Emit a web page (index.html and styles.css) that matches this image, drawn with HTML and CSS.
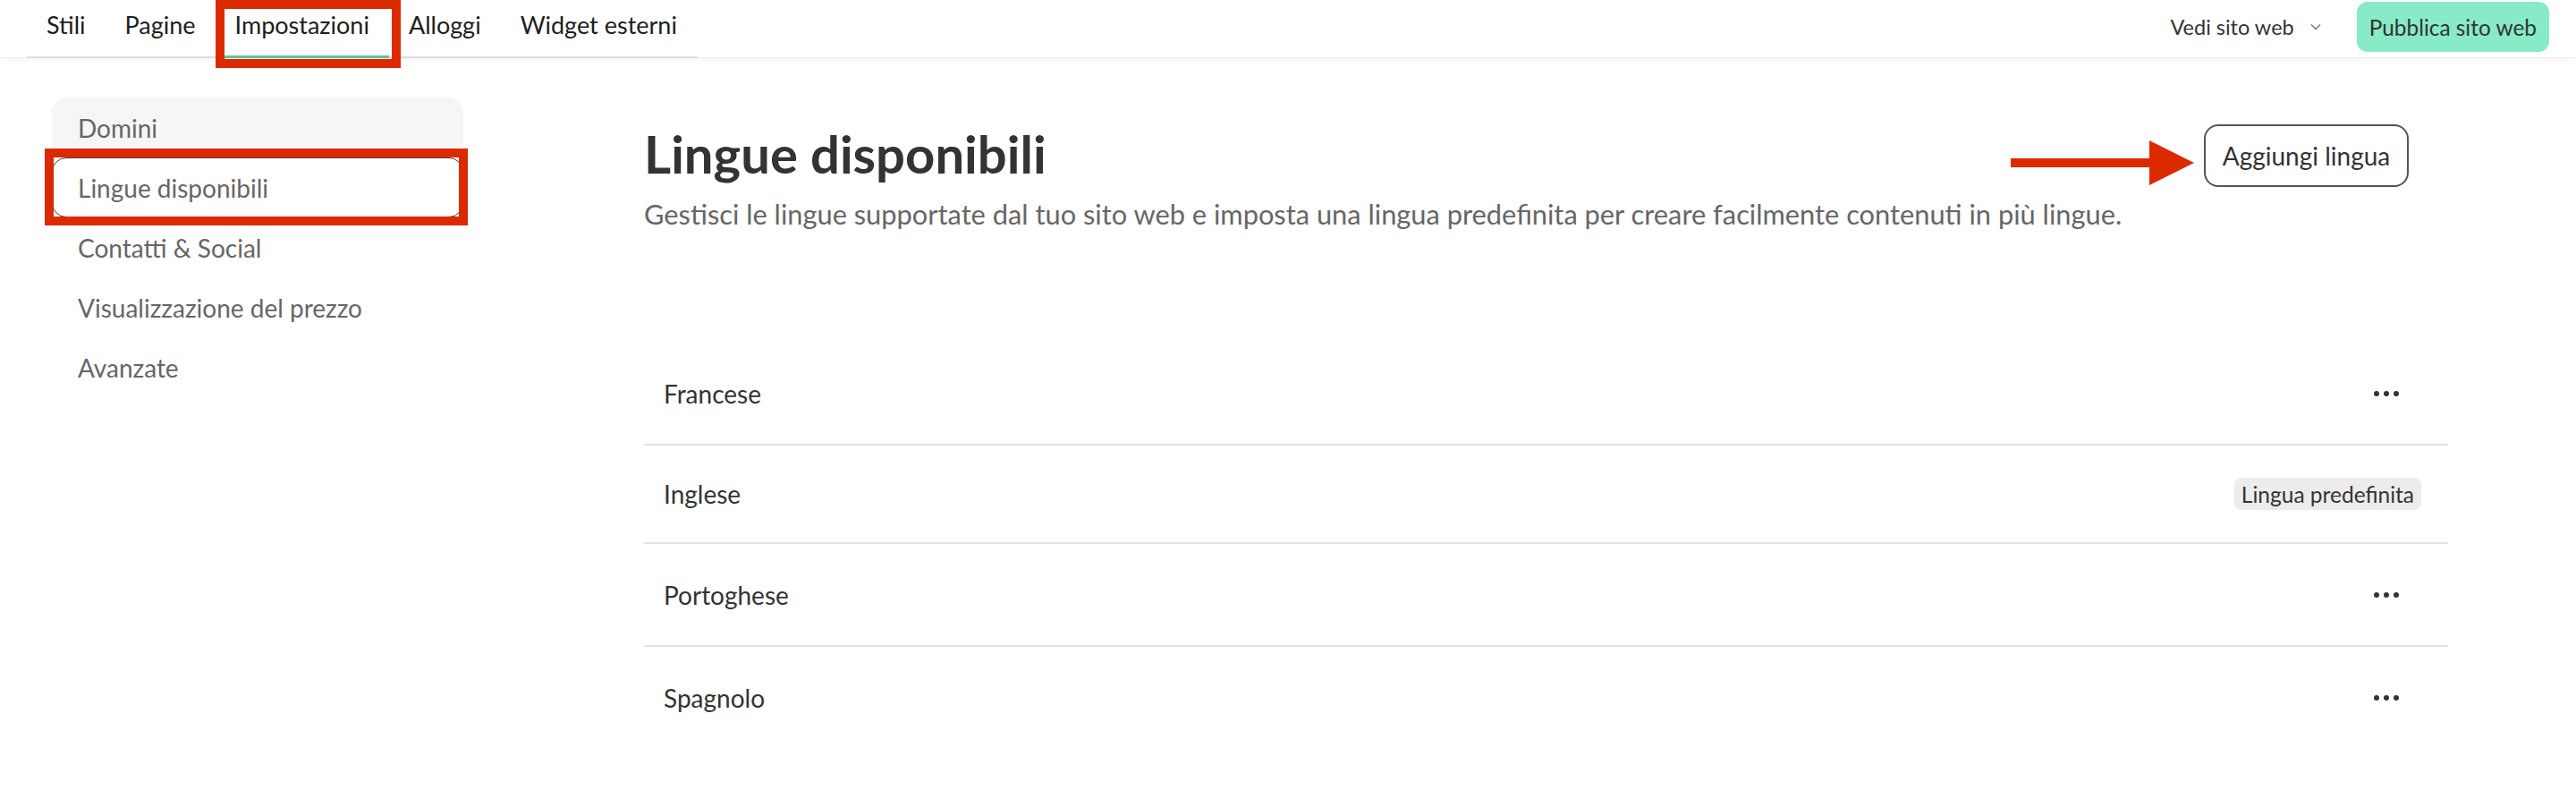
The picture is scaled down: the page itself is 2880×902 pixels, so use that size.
FILE: index.html
```html
<!DOCTYPE html>
<html lang="it">
<head>
<meta charset="utf-8">
<title>Lingue disponibili</title>
<link rel="stylesheet" href="styles.css">
</head>
<body>
<header class="topbar">
  <nav class="tabs">
    <a class="tab">Stili</a>
    <a class="tab">Pagine</a>
    <a class="tab active">Impostazioni</a>
    <a class="tab">Alloggi</a>
    <a class="tab">Widget esterni</a>
  </nav>
  <div class="top-actions">
    <button class="view-site">Vedi sito web
      <svg class="chev" width="12" height="8" viewBox="0 0 12 8"><path d="M1 1.5 L6 6.5 L11 1.5" fill="none" stroke="#777" stroke-width="1.4"/></svg>
    </button>
    <button class="publish">Pubblica sito web</button>
  </div>
</header>

<div class="layout">
  <aside class="sidebar">
    <a class="side-item hover">Domini</a>
    <a class="side-item selected">Lingue disponibili</a>
    <a class="side-item">Contatti &amp; Social</a>
    <a class="side-item">Visualizzazione del prezzo</a>
    <a class="side-item">Avanzate</a>
  </aside>

  <main class="content">
    <div class="content-head">
      <div class="head-text">
        <h1 class="title">Lingue disponibili</h1>
        <p class="subtitle">Gestisci le lingue supportate dal tuo sito web e imposta una lingua predefinita per creare facilmente contenuti in più lingue.</p>
      </div>
      <button class="add-btn">Aggiungi lingua</button>
    </div>

    <ul class="lang-list">
      <li class="lang-row"><span class="lang-name">Francese</span><button class="more"><svg width="28" height="8" viewBox="0 0 28 8"><circle cx="3" cy="4" r="3"/><circle cx="14" cy="4" r="3"/><circle cx="25" cy="4" r="3"/></svg></button></li>
      <li class="lang-row short"><span class="lang-name">Inglese</span><span class="badge">Lingua predefinita</span></li>
      <li class="lang-row"><span class="lang-name">Portoghese</span><button class="more"><svg width="28" height="8" viewBox="0 0 28 8"><circle cx="3" cy="4" r="3"/><circle cx="14" cy="4" r="3"/><circle cx="25" cy="4" r="3"/></svg></button></li>
      <li class="lang-row"><span class="lang-name">Spagnolo</span><button class="more"><svg width="28" height="8" viewBox="0 0 28 8"><circle cx="3" cy="4" r="3"/><circle cx="14" cy="4" r="3"/><circle cx="25" cy="4" r="3"/></svg></button></li>
    </ul>
  </main>
</div>

<div class="annot annot-tab"></div>
<div class="annot annot-side"></div>
<svg class="annot-arrow" width="206" height="54" viewBox="0 0 206 54"><rect x="0" y="22" width="158" height="10" fill="#dc2a00"/><polygon points="155,2 205,27 155,52" fill="#dc2a00"/></svg>
</body>
</html>
```

FILE: styles.css
```css
* { box-sizing: border-box; }

html, body {
  margin: 0;
  padding: 0;
  background: #ffffff;
}

body {
  position: relative;
  width: 2880px;
  height: 902px;
  overflow: hidden;
  font-family: Lato, "Noto Sans", sans-serif;
  color: #333333;
}

button {
  font-family: inherit;
  cursor: pointer;
}

/* ---------- top bar ---------- */
.topbar {
  display: flex;
  justify-content: space-between;
  align-items: flex-start;
  height: 65px;
  padding: 0 30px;
  border-bottom: 1px solid #ececec;
  box-shadow: 0 3px 10px rgba(0, 0, 0, 0.04);
}

.tabs {
  display: flex;
  height: 65px;
  box-shadow: inset 0 -2px 0 #dddddd;
}

.tab {
  display: flex;
  align-items: center;
  padding: 0 22px 10px;
  font-size: 27px;
  color: #1d1d1d;
}

.tab.active {
  box-shadow: inset 0 -3px 0 #68bf98;
}

.top-actions {
  display: flex;
  align-items: center;
  gap: 40px;
  height: 60px;
}

.view-site {
  display: flex;
  align-items: center;
  gap: 18px;
  border: none;
  background: none;
  padding: 0;
  font-size: 23.5px;
  color: #333333;
}

.publish {
  height: 56px;
  padding: 0 14px;
  border: none;
  border-radius: 12px;
  background: #86ebc6;
  font-size: 24.4px;
  color: #333333;
}

/* ---------- layout ---------- */
.layout {
  display: flex;
}

.sidebar {
  display: flex;
  flex-direction: column;
  width: 518px;
  padding: 44px 0 0 58px;
}

.side-item {
  display: flex;
  align-items: center;
  width: 460px;
  height: 67px;
  padding-left: 28px;
  border: 1.5px solid transparent;
  border-radius: 16px;
  font-size: 28px;
  color: #666666;
}

.side-item.hover {
  background: #f6f6f6;
}

.side-item.selected {
  border-color: #444444;
  background: #ffffff;
}

/* ---------- content ---------- */
.content {
  width: 2017px;
  margin-left: 202px;
}

.content-head {
  display: flex;
  justify-content: space-between;
  align-items: flex-start;
  padding: 76px 44px 0 0;
}

.title {
  margin: 0;
  font-size: 58px;
  line-height: 62px;
  font-weight: 700;
  color: #333333;
}

.subtitle {
  margin: 17px 0 0;
  font-size: 30.8px;
  line-height: 40px;
  color: #666666;
}

.add-btn {
  width: 229px;
  height: 70px;
  margin-top: -2px;
  border: 2px solid #555555;
  border-radius: 16px;
  background: #ffffff;
  font-size: 28px;
  color: #333333;
}

.lang-list {
  list-style: none;
  margin: 123px 0 0;
  padding: 0;
}

.lang-row {
  display: flex;
  justify-content: space-between;
  align-items: center;
  padding: 27px 30px 27px 22px;
  border-bottom: 2px solid #e2e2e2;
}

.lang-row:last-child {
  border-bottom: none;
}

.lang-row.short {
  min-height: 110px;
}

.lang-name {
  font-size: 28px;
  line-height: 54px;
  color: #333333;
}

.more {
  display: flex;
  align-items: center;
  justify-content: center;
  width: 78px;
  height: 59px;
  padding: 0;
  border: none;
  background: none;
}

.more svg {
  fill: #333333;
}

.badge {
  display: inline-flex;
  align-items: center;
  height: 36px;
  padding: 0 8px;
  border-radius: 8px;
  background: #ececec;
  font-size: 24.5px;
  color: #333333;
}

/* ---------- annotations (overlay) ---------- */
.annot {
  position: absolute;
  border: 10px solid #dc2a00;
}

.annot-tab {
  left: 241px;
  top: 0;
  width: 207px;
  height: 76px;
}

.annot-side {
  left: 50px;
  top: 166px;
  width: 473px;
  height: 86px;
}

.annot-arrow {
  position: absolute;
  left: 2248px;
  top: 155px;
}
```
